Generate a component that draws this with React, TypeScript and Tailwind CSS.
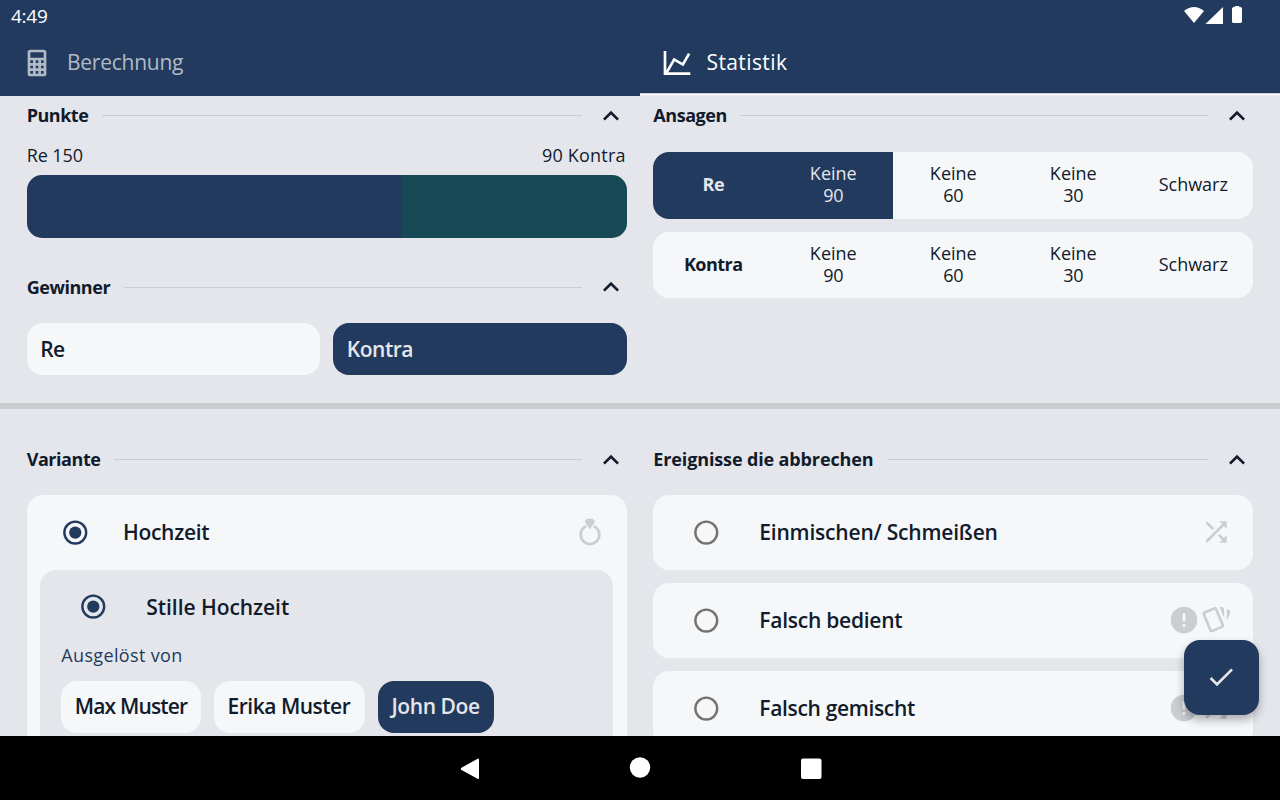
import type { ReactNode } from "react";

const paths = {
  calculator:
    "M7,2H17A2,2 0 0,1 19,4V20A2,2 0 0,1 17,22H7A2,2 0 0,1 5,20V4A2,2 0 0,1 7,2M7,4V8H17V4H7M7,10V12H9V10H7M11,10V12H13V10H11M15,10V12H17V10H15M7,14V16H9V14H7M11,14V16H13V14H11M15,14V16H17V14H15M7,18V20H9V18H7M11,18V20H13V18H11M15,18V20H17V18H15Z",
  chart:
    "M16,11.78L20.24,4.45L21.97,5.45L16.74,14.5L10.23,10.75L5.46,19H22V21H2V3H4V17.54L9.5,8L16,11.78Z",
  up: "M7.41,15.41L12,10.83L16.59,15.41L18,14L12,8L6,14L7.41,15.41Z",
  ring: "M12,10L8,4.4L9.6,2H14.2L15.8,4.4L12,10M15.5,6.8L14.3,8.5C16.5,9.4 18,11.5 18,14A6,6 0 0,1 12,20A6,6 0 0,1 6,14C6,11.5 7.6,9.4 9.7,8.5L8.5,6.8C5.8,8.1 4,10.8 4,14A8,8 0 0,0 12,22A8,8 0 0,0 20,14C20,10.8 18.2,8.1 15.5,6.8Z",
  shuffle:
    "M14.83,13.41L13.42,14.82L16.55,17.95L14.5,20H20V14.5L17.96,16.54L14.83,13.41M14.5,4L16.54,6.04L4,18.59L5.41,20L17.96,7.46L20,9.5V4M10.59,9.17L5.41,4L4,5.41L9.17,10.58L10.59,9.17Z",
  alert:
    "M13,13H11V7H13M13,17H11V15H13M12,2A10,10 0 0,0 2,12A10,10 0 0,0 12,22A10,10 0 0,0 22,12A10,10 0 0,0 12,2Z",
  cards:
    "M11.19,2.25C10.93,2.25 10.67,2.31 10.42,2.4L3.06,5.45C2.04,5.87 1.55,7.04 1.97,8.05L6.93,20C7.24,20.77 7.97,21.23 8.74,21.25C9,21.25 9.27,21.22 9.54,21.1L16.91,18.05C17.65,17.74 18.11,17 18.13,16.25C18.14,15.97 18.09,15.71 18,15.46L13,3.5C12.71,2.73 11.97,2.26 11.19,2.25M14.67,2.25L18.12,10.6V4.25A2,2 0 0,0 16.12,2.25M20.13,3.79V12.82L22.56,6.96C22.97,5.94 22.5,4.77 21.46,4.35M11.19,4.22L16.17,16.24L8.78,19.3L3.8,7.29L11.19,4.22Z",
  check: "M21,7L9,19L3.5,13.5L4.91,12.09L9,16.17L19.59,5.59L21,7Z",
};

function Icon({ name, className = "" }: { name: keyof typeof paths; className?: string }) {
  return (
    <svg viewBox="0 0 24 24" className={`size-8 shrink-0 fill-current ${className}`}>
      <path fillRule="evenodd" d={paths[name]} />
    </svg>
  );
}

function SectionHeader({ title, tracking }: { title: string; tracking: string }) {
  return (
    <div className="flex h-8 items-center">
      <h2 className={`mr-[14px] text-[18px] font-bold whitespace-nowrap ${tracking}`}>{title}</h2>
      <div className="mr-[13px] h-px flex-1 bg-[#cbcdd2]" />
      <Icon name="up" />
    </div>
  );
}

function Radio({ checked = false }: { checked?: boolean }) {
  return (
    <svg viewBox="0 0 24 24" className={`size-8 shrink-0 ${checked ? "text-[#223a5e]" : "text-[#737373]"}`}>
      <circle cx="12.2" cy="11.7" r="8.2" fill="none" stroke="currentColor" strokeWidth="1.8" />
      {checked && <circle cx="12.2" cy="11.7" r="4.6" fill="currentColor" />}
    </svg>
  );
}

function Choice({ label, tracking, active = false, className = "" }: { label: string; tracking: string; active?: boolean; className?: string }) {
  return (
    <div
      className={`flex h-[52px] items-center rounded-2xl px-[13.5px] text-[21px] font-semibold whitespace-nowrap ${tracking} ${
        active ? "bg-[#223a5e] text-[#e5e6eb]" : "bg-[#f5f7f9]"
      } ${className}`}
    >
      {label}
    </div>
  );
}

function CallRow({ party, active, partyTracking }: { party: string; active: boolean; partyTracking: string }) {
  const on = active ? "bg-[#223a5e] text-[#e5e6eb]" : "";
  return (
    <div className="grid h-[66.5px] grid-cols-5 items-stretch overflow-hidden rounded-2xl bg-[#f5f7f9] text-center text-[18px] leading-[22.5px]">
      <div className={`flex items-center justify-center pb-[2px] font-bold ${partyTracking} ${on}`}>{party}</div>
      <div className={`flex flex-col justify-center pb-[2px] ${on}`}>
        <span>Keine</span>
        <span className="tracking-[-0.2px]">90</span>
      </div>
      {["60", "30"].map((n) => (
        <div key={n} className="flex flex-col justify-center pb-[2px]">
          <span>Keine</span>
          <span className="tracking-[-0.2px]">{n}</span>
        </div>
      ))}
      <div className="flex items-center justify-center pb-[2px]">Schwarz</div>
    </div>
  );
}

function EventCard({ label, tracking, children }: { label: string; tracking: string; children: ReactNode }) {
  return (
    <div className="flex h-[74.67px] shrink-0 items-center rounded-2xl bg-[#f5f7f9] pr-[21px] pl-[37px]">
      <Radio />
      <span className={`ml-[37px] flex-1 text-[21px] font-semibold whitespace-nowrap ${tracking}`}>{label}</span>
      <div className="flex pb-px text-[#cbcdd2]">{children}</div>
    </div>
  );
}

export default function App() {
  return (
    <div className="flex h-[800px] w-[1280px] flex-col overflow-hidden bg-[#e5e6eb] font-['Open_Sans','Noto_Sans',sans-serif] text-[#111b2b]">
      <header className="h-24 shrink-0 bg-[#223a5e] text-white">
        <div className="flex h-8 items-center justify-between pr-[37px] pl-[11px]">
          <span className="text-[19px] tracking-[-0.25px]">4:49</span>
          <svg viewBox="0 0 60 20" className="mb-[2px] h-5 w-[60px] fill-white">
            <path d="M1 6Q11 -2 21 6L11 18Z" />
            <path d="M40 2V19H22.5Z" />
            <path d="M50 2.6Q50 2 50.6 2H51.8V1H56.2V2H57.4Q59 2 59 3.6V16.4Q59 18 57.4 18H50.6Q49 18 49 16.4V3.6Q49 2.6 50 2.6Z" />
          </svg>
        </div>
        <nav className="grid h-16 grid-cols-2 text-[21px]">
          <div className="flex items-center pb-[2px] pl-[21px] text-[#b2bac6]">
            <Icon name="calculator" />
            <span className="ml-[14px] tracking-[-0.25px]">Berechnung</span>
          </div>
          <div className="flex flex-col">
            <div className="flex flex-1 items-center pt-px pl-[21px]">
              <Icon name="chart" />
              <span className="ml-[13.5px] tracking-[0.4px]">Statistik</span>
            </div>
            <div className="h-px bg-[#c8cdd7]" />
            <div className="h-px bg-white" />
            <div className="h-px bg-[#e9eaee]" />
          </div>
        </nav>
      </header>

      <section className="flex h-[306.5px] shrink-0 gap-[26.6px] pt-[3.5px] pr-[26.7px] pl-[26.7px]">
        <div className="w-[600px] shrink-0">
          <SectionHeader title="Punkte" tracking="tracking-[-0.5px]" />
          <div className="mt-[11px] flex h-[25px] items-center justify-between pr-px text-[18px]">
            <span className="tracking-[-0.1px]">Re 150</span>
            <span className="tracking-[0.2px]">90 Kontra</span>
          </div>
          <div className="mt-[7.3px] flex h-[63.3px] overflow-hidden rounded-[15px]">
            <div className="w-[62.5%] bg-[#223a5e]" />
            <div className="flex-1 bg-[#164955]" />
          </div>
          <div className="mt-[33.4px]">
            <SectionHeader title="Gewinner" tracking="tracking-[-0.45px]" />
          </div>
          <div className="mt-[20px] grid grid-cols-2 gap-[13.3px]">
            <Choice label="Re" tracking="tracking-[-0.5px]" />
            <Choice label="Kontra" tracking="tracking-[-0.5px]" active />
          </div>
        </div>
        <div className="w-[600px] shrink-0">
          <SectionHeader title="Ansagen" tracking="tracking-[-0.45px]" />
          <div className="mt-[20.5px] flex flex-col gap-[13.3px]">
            <CallRow party="Re" active partyTracking="tracking-[-0.5px]" />
            <CallRow party="Kontra" active={false} partyTracking="tracking-[-0.5px]" />
          </div>
        </div>
      </section>

      <div className="h-[6.5px] shrink-0 bg-[#cbccd0]" />

      <section className="relative flex h-[327px] shrink-0 gap-[26.6px] overflow-hidden px-[26.7px] pt-[34.5px]">
        <div className="w-[600px] shrink-0">
          <SectionHeader title="Variante" tracking="tracking-[-0.45px]" />
          <div className="mt-[19.8px] h-[300px] rounded-t-2xl bg-[#f5f7f9] px-[13.3px]">
            <div className="flex h-[74.67px] items-center pr-[7.3px] pl-[19px]">
              <Radio checked />
              <span className="ml-[32px] flex-1 text-[21px] font-semibold tracking-[-0.3px]">Hochzeit</span>
              <Icon name="ring" className="mb-px text-[#cbcdd2]" />
            </div>
            <div className="h-[220px] rounded-t-2xl bg-[#e5e6eb] px-[21.3px]">
              <div className="flex h-[74.67px] items-center pl-[16px]">
                <Radio checked />
                <span className="ml-[37px] text-[21px] font-semibold tracking-[-0.05px]">Stille Hochzeit</span>
              </div>
              <div className="-mt-px flex h-6 items-center text-[18px] text-[#223a5e]">
                <span className="tracking-[0.35px]">Ausgelöst von</span>
              </div>
              <div className="mt-[13px] flex gap-[13.3px]">
                <Choice label="Max Muster" tracking="tracking-[-0.85px]" className="w-[139.5px]" />
                <Choice label="Erika Muster" tracking="tracking-[-0.5px]" className="w-[150.5px]" />
                <Choice label="John Doe" tracking="tracking-[-0.4px]" className="w-[116px]" active />
              </div>
            </div>
          </div>
        </div>
        <div className="w-[600px] shrink-0">
          <SectionHeader title="Ereignisse die abbrechen" tracking="tracking-[-0.13px]" />
          <div className="mt-[19.8px] flex flex-col gap-[13.3px]">
            <EventCard label="Einmischen/ Schmeißen" tracking="tracking-[-0.2px]">
              <Icon name="shuffle" />
            </EventCard>
            <EventCard label="Falsch bedient" tracking="tracking-[-0.25px]">
              <Icon name="alert" />
              <Icon name="cards" />
            </EventCard>
            <EventCard label="Falsch gemischt" tracking="tracking-[-0.33px]">
              <Icon name="alert" />
              <Icon name="shuffle" />
            </EventCard>
          </div>
        </div>
        <button className="absolute right-[21.3px] bottom-[21.3px] flex size-[74.67px] items-center justify-center rounded-2xl bg-[#223a5e] text-[#e5e6eb] shadow-[0_5px_10px_rgba(0,0,0,0.3)]">
          <Icon name="check" />
        </button>
      </section>

      <footer className="flex h-16 shrink-0 items-center justify-center bg-black">
        <svg viewBox="0 0 362 24" className="ml-px h-6 w-[362px] fill-white">
          <path d="M1.5 11.8L17.6 2.7Q19 2 19 3.5V22Q19 23.5 17.6 22.8L1.5 13.9Q0 12.9 1.5 11.8Z" />
          <circle cx="180" cy="11.5" r="10.2" />
          <rect x="341" y="2.5" width="20.5" height="20.5" rx="2" />
        </svg>
      </footer>
    </div>
  );
}
